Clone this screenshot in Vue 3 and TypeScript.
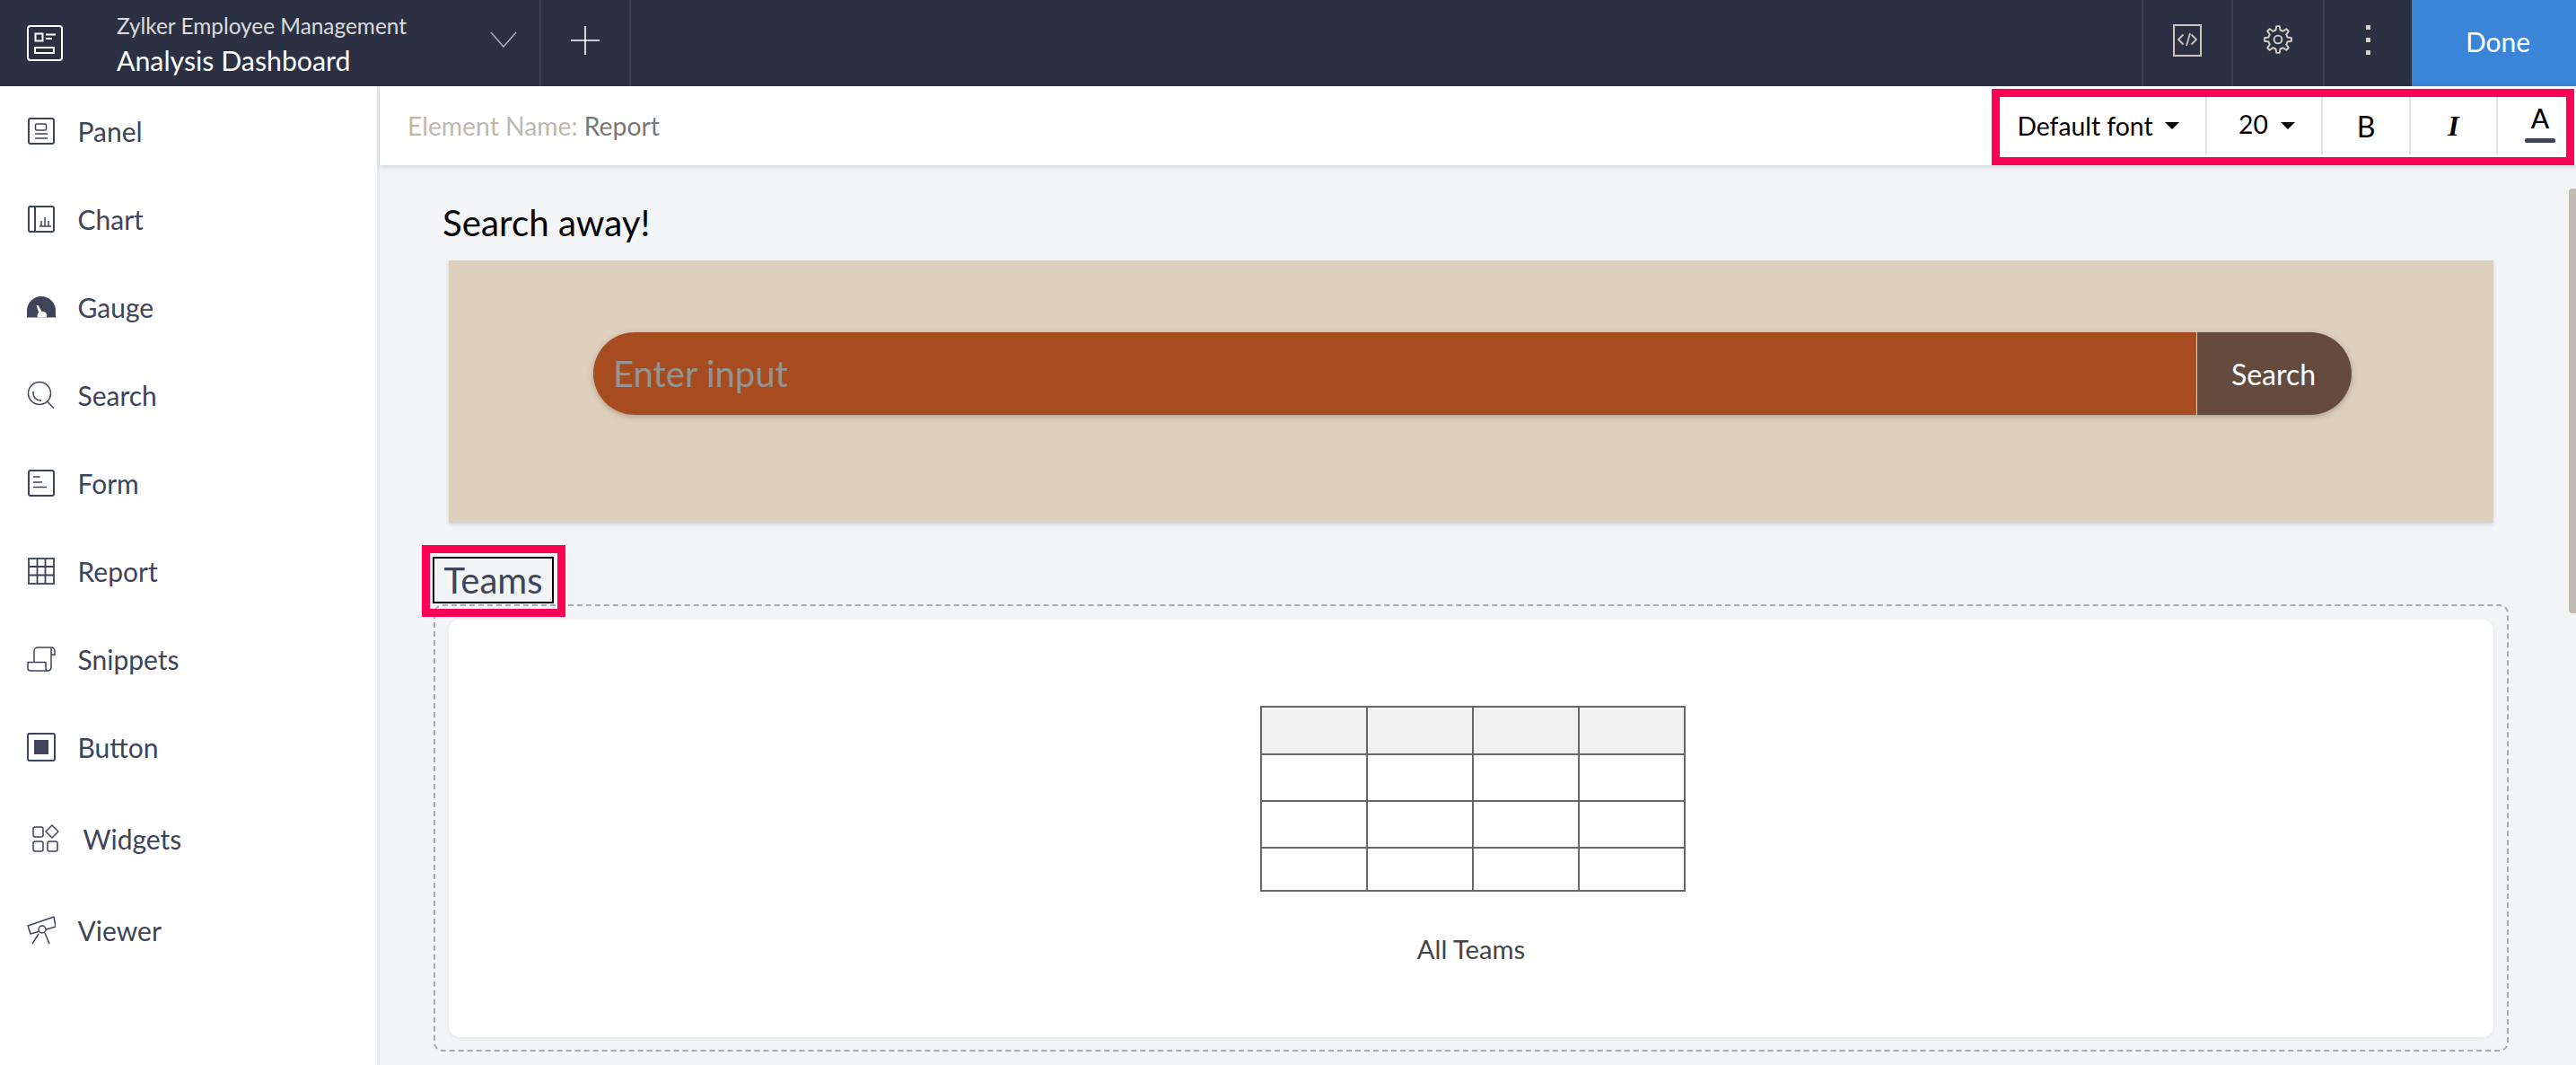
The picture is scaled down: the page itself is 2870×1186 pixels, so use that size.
<script setup lang="ts">
const gearPath = (() => {
  const pts: string[] = []
  const cx = 16, cy = 16
  const teeth = 8
  for (let i = 0; i < teeth; i++) {
    const a = (i * 2 * Math.PI) / teeth - Math.PI / 2
    const step = (2 * Math.PI) / teeth
    const list: [number, number][] = [
      [10.8, a - step * 0.3],
      [15, a - step * 0.15],
      [15, a + step * 0.15],
      [10.8, a + step * 0.3],
    ]
    for (const [r, t] of list) {
      pts.push(`${(cx + r * Math.cos(t)).toFixed(2)} ${(cy + r * Math.sin(t)).toFixed(2)}`)
    }
  }
  return 'M' + pts.join('L') + 'Z'
})()

const rows = [0, 1, 2, 3]
const cols = [0, 1, 2, 3]
</script>

<template>
  <div class="app">
    <header class="topbar">
      <div class="logo">
        <svg width="40" height="40" viewBox="0 0 40 40" fill="none" stroke="#fff" stroke-width="2">
          <rect x="1" y="1" width="38" height="38" rx="3" />
          <rect x="9.5" y="9.5" width="8" height="8" />
          <path d="M21 10.5H32M21 15H28" />
          <rect x="9" y="25" width="21" height="6" />
        </svg>
      </div>
      <div class="titles">
        <div class="app-name">Zylker Employee Management</div>
        <div class="page-name">Analysis Dashboard</div>
      </div>
      <div class="chev">
        <svg width="30" height="18" viewBox="0 0 30 18" fill="none" stroke="#a9abb2" stroke-width="1.6">
          <path d="M1 1L15 17L29 1" />
        </svg>
      </div>
      <div class="cell plus">
        <svg width="34" height="34" viewBox="0 0 34 34" fill="none" stroke="#fff" stroke-width="1.6">
          <path d="M17 1V33M1 17H33" />
        </svg>
      </div>
      <div class="spacer"></div>
      <div class="cell code">
        <svg width="32" height="36" viewBox="0 0 32 36" fill="none" stroke="#cbc6bc" stroke-width="2">
          <rect x="1" y="1" width="30" height="34" />
          <path d="M11.5 11.5L6 17L11.5 22.5M20.5 11.5L26 17L20.5 22.5M19 10L15 24" stroke-width="1.8" />
        </svg>
      </div>
      <div class="cell gear">
        <svg width="32" height="32" viewBox="0 0 32 32" fill="none" stroke="#d6d0c6" stroke-width="1.9" stroke-linejoin="round">
          <path :d="gearPath" />
          <circle cx="16" cy="16" r="4.4" />
        </svg>
      </div>
      <div class="cell dots"><i></i><i></i><i></i></div>
      <button class="done">Done</button>
    </header>

    <div class="body">
      <aside class="sidebar">
        <div class="nav-row">
          <span class="nav-icon">
            <svg width="32" height="32" viewBox="0 0 32 32" fill="none" stroke="#3e4459" stroke-width="2">
              <rect x="2" y="2" width="28" height="28" rx="2" />
              <rect x="9.5" y="8" width="12" height="7" rx="1.5" stroke-width="1.5" />
              <path d="M9 19H23M9 24H23" stroke-width="1.5" />
            </svg>
          </span>
          <span>Panel</span>
        </div>
        <div class="nav-row">
          <span class="nav-icon">
            <svg width="32" height="32" viewBox="0 0 32 32" fill="none" stroke="#3e4459" stroke-width="2">
              <rect x="2" y="2" width="28" height="28" rx="2" />
              <path d="M9 2V30" />
              <path d="M14 24H27M16 24V18M20 24V14M24 24V18" stroke-width="1.5" />
            </svg>
          </span>
          <span>Chart</span>
        </div>
        <div class="nav-row">
          <span class="nav-icon">
            <svg width="32" height="24" viewBox="0 0 32 24" fill="#3e4459">
              <path d="M0 23.5V16A16 16 0 0 1 32 16V23.5Z" />
              <path d="M10.5 10L12.8 10L16.5 17A4.5 4.5 0 0 1 21.7 23.5H12A5 5 0 0 1 13.2 18Z" fill="#fff" />
            </svg>
          </span>
          <span>Gauge</span>
        </div>
        <div class="nav-row">
          <span class="nav-icon">
            <svg width="32" height="32" viewBox="0 0 32 32" fill="none" stroke="#3e4459" stroke-width="1.5">
              <circle cx="14" cy="14" r="12.5" />
              <path d="M7 12C6.5 18 10 22 16 22" />
              <path d="M22.5 23L30 30.5" />
            </svg>
          </span>
          <span>Search</span>
        </div>
        <div class="nav-row">
          <span class="nav-icon">
            <svg width="32" height="32" viewBox="0 0 32 32" fill="none" stroke="#3e4459" stroke-width="2">
              <rect x="2" y="2" width="28" height="28" rx="2" />
              <path d="M7 9H14.5M7 15H17M7 20.5H22" stroke-width="1.5" />
            </svg>
          </span>
          <span>Form</span>
        </div>
        <div class="nav-row">
          <span class="nav-icon">
            <svg width="32" height="32" viewBox="0 0 32 32" fill="none" stroke="#3e4459" stroke-width="1.8">
              <rect x="2" y="2" width="28" height="28" />
              <path d="M11.5 2V30M20.5 2V30M2 11H30M2 20.5H30" />
            </svg>
          </span>
          <span>Report</span>
        </div>
        <div class="nav-row">
          <span class="nav-icon">
            <svg width="32" height="30" viewBox="0 0 32 30" fill="none" stroke="#3e4459" stroke-width="1.5">
              <path d="M1 18.5H21V25A3 3 0 0 0 24 28H4A3 3 0 0 1 1 25Z" />
              <path d="M8 18V6A4 4 0 0 1 12 2H27A4 4 0 0 1 31 6V10H27" />
              <path d="M27 3V24A4 4 0 0 1 24 28" />
            </svg>
          </span>
          <span>Snippets</span>
        </div>
        <div class="nav-row">
          <span class="nav-icon">
            <svg width="32" height="32" viewBox="0 0 32 32" fill="none" stroke="#3e4459" stroke-width="2">
              <rect x="1" y="1" width="30" height="30" rx="2" />
              <rect x="8" y="8" width="16" height="16" fill="#3e4459" stroke="none" />
            </svg>
          </span>
          <span>Button</span>
        </div>
        <div class="nav-row shifted">
          <span class="nav-icon">
            <svg width="32" height="32" viewBox="0 0 32 32" fill="none" stroke="#3e4459" stroke-width="1.5">
              <rect x="1" y="3" width="11" height="11" rx="2" />
              <rect x="1" y="19" width="11" height="11" rx="2" />
              <rect x="17" y="19" width="11" height="11" rx="2" />
              <path d="M22 1L29 8L22 15L15 8Z" stroke-linejoin="round" />
            </svg>
          </span>
          <span>Widgets</span>
        </div>
        <div class="nav-row viewer">
          <span class="nav-icon">
            <svg width="32" height="32" viewBox="0 0 32 32" fill="none" stroke="#3e4459" stroke-width="1.5">
              <path d="M1 11L30 1L32 12L4 20Z" stroke-linejoin="round" />
              <circle cx="17" cy="15" r="4" fill="#fff" />
              <path d="M13 20L6 31M20 19L25 31" />
            </svg>
          </span>
          <span>Viewer</span>
        </div>
      </aside>

      <main class="main">
        <div class="toolbar">
          <div class="element-name"><span class="label">Element Name:</span> Report</div>
          <div class="format">
            <div class="fmt font">Default font <b class="caret"></b></div>
            <div class="fmt size"><span class="size-val">20</span> <b class="caret"></b></div>
            <div class="fmt bold">B</div>
            <div class="fmt italic">I</div>
            <div class="fmt color"><span>A</span><i></i></div>
          </div>
          <div class="mark mark-tools"></div>
        </div>

        <div class="content">
          <h2 class="section-title">Search away!</h2>
          <section class="search-panel">
            <div class="search-bar">
              <div class="search-input">Enter input</div>
              <button class="search-btn">Search</button>
            </div>
          </section>

          <div class="teams-heading">
            <span class="teams-box">Teams</span>
            <div class="mark mark-teams"></div>
          </div>
          <div class="drop-zone">
            <div class="report-card">
              <table class="thumb">
                <tr v-for="r in rows" :key="r" :class="{ head: r === 0, last: r === 3 }">
                  <td v-for="c in cols" :key="c"></td>
                </tr>
              </table>
              <div class="report-name">All Teams</div>
            </div>
          </div>
        </div>
        <div class="scroll-thumb"></div>
      </main>
    </div>
  </div>
</template>

<style>
html, body { margin: 0; padding: 0; background: #fff; overflow: hidden; }
</style>

<style scoped>
.app {
  width: 2870px;
  height: 1186px;
  display: flex;
  flex-direction: column;
  overflow: hidden;
  font-family: Lato, "Open Sans", sans-serif;
  color: #3e4459;
}
.topbar {
  height: 96px;
  flex: none;
  background: #2b3142;
  display: flex;
  align-items: stretch;
  color: #fff;
}
.logo { width: 130px; display: flex; align-items: center; padding-left: 30px; box-sizing: border-box; }
.titles { width: 400px; display: flex; flex-direction: column; justify-content: center; padding-top: 8px; box-sizing: border-box; }
.app-name { font-size: 24.4px; line-height: 32px; color: #dcdcdc; margin-top: -4px; }
.page-name { font-size: 30.3px; line-height: 40px; color: #fff; margin-top: 2px; }
.chev { width: 71px; display: flex; align-items: center; padding: 0 0 9px 16px; box-sizing: border-box; }
.cell {
  display: flex;
  align-items: center;
  justify-content: center;
  border-left: 2px solid #3c4254;
  box-sizing: border-box;
  padding-bottom: 7px;
}
.plus { width: 102px; border-right: 2px solid #3c4254; }
.spacer { flex: 1; }
.code { width: 100px; padding-bottom: 6px; }
.gear { width: 102px; padding-bottom: 8px; }
.dots { width: 99px; flex-direction: column; gap: 9px; padding-bottom: 8px; }
.dots i { width: 5px; height: 5px; background: #d6d0c6; display: block; }
.done {
  width: 183px;
  border: 0;
  background: #3a85d8;
  color: #fff;
  font: 30px Lato, sans-serif;
  padding: 0 0 4px 9px;
}
.body { flex: 1; display: flex; min-height: 0; }
.sidebar {
  width: 423px;
  flex: none;
  box-sizing: border-box;
  background: #fff;
  border-right: 3px solid #eaebed;
  padding-top: 1px;
  font-size: 30px;
}
.nav-row {
  height: 98px;
  display: flex;
  align-items: center;
  padding-left: 30px;
}
.nav-icon { width: 56.5px; display: flex; align-items: center; flex: none; }
.shifted { margin-top: 4px; padding-left: 36px; }
.viewer { margin-top: 4px; }
.main { flex: 1; position: relative; background: #f2f4f6; display: flex; flex-direction: column; min-width: 0; }
.toolbar {
  position: relative;
  height: 88px;
  flex: none;
  background: #fff;
  box-shadow: 0 2px 6px rgba(60, 70, 90, 0.18);
  display: flex;
  align-items: center;
  justify-content: space-between;
  padding-left: 31px;
  font-size: 28.3px;
  color: #787878;
  z-index: 1;
}
.label { color: #bcb8ae; }
.format {
  width: 631px;
  height: 64px;
  margin-right: 11px;
  display: flex;
  color: #000;
  font-size: 28.3px;
}
.fmt {
  display: flex;
  align-items: center;
  justify-content: center;
  border-right: 2px solid #e2e2e2;
  box-sizing: border-box;
}
.font { width: 231px; gap: 13px; padding-right: 10px; }
.size { width: 129px; gap: 14px; padding-left: 6px; }
.size-val { margin-top: -5px; }
.bold { width: 98px; font-size: 32px; }
.italic { width: 97px; font: italic 700 32px "Liberation Serif", serif; }
.color {
  flex: 1;
  border-right: 0;
  flex-direction: column;
  font-size: 30px;
  font-weight: 500;
  line-height: 30px;
  padding: 0 0 6px 18px;
}
.color i { width: 34px; height: 5px; border-radius: 2px; background: #3e4459; display: block; margin-top: 8px; }
.caret {
  width: 0;
  height: 0;
  border-left: 8px solid transparent;
  border-right: 8px solid transparent;
  border-top: 8px solid #000;
  display: block;
}
.mark { position: absolute; border: 9px solid #ff0055; box-sizing: border-box; pointer-events: none; }
.mark-tools { right: 2px; top: 3px; width: 649px; height: 85px; }
.content { flex: 1; min-height: 0; padding: 41px 92px 0 77px; }
.section-title {
  margin: 0 0 19px -7px;
  font-size: 40.3px;
  font-weight: 400;
  line-height: 46px;
  color: #000;
}
.search-panel {
  height: 292px;
  background: #ddd0bc;
  box-shadow: 0 2px 4px rgba(90, 100, 120, 0.22);
  display: flex;
  align-items: flex-start;
  justify-content: flex-start;
  padding: 80px 0 0 161px;
  box-sizing: border-box;
}
.search-bar {
  width: 1959px;
  height: 92px;
  display: flex;
  border-radius: 46px;
  overflow: hidden;
  box-shadow: 0 2px 6px rgba(60, 50, 40, 0.3);
}
.search-input {
  flex: 1;
  background: #a74c20;
  color: #949494;
  font-size: 40px;
  line-height: 92px;
  padding-left: 22px;
  border-right: 1px solid #e8d8c4;
}
.search-btn {
  width: 172px;
  border: 0;
  background: #644b3e;
  color: #fff;
  font: 32px Lato, sans-serif;
  padding: 0 2px 0 0;
}
.teams-heading { position: relative; margin: 38px 0 1px -18px; height: 52px; }
.teams-box {
  display: inline-block;
  box-sizing: border-box;
  height: 52px;
  width: 135px;
  border: 2px solid #000;
  font-size: 40px;
  line-height: 48px;
  text-align: center;
  color: #3e4459;
}
.mark-teams { left: -12px; top: -13px; width: 160px; height: 80px; }
.drop-zone {
  margin: 0 -17px;
  height: 498px;
  box-sizing: border-box;
  border: 2px dashed #aaa;
  border-radius: 10px;
  padding: 15px;
}
.report-card {
  height: 465px;
  background: #fff;
  border-radius: 12px;
  box-shadow: 0 1px 4px rgba(60, 70, 90, 0.1);
  display: flex;
  flex-direction: column;
  align-items: center;
  padding-top: 96px;
  box-sizing: border-box;
}
.thumb {
  width: 474px;
  margin-left: 3px;
  border-collapse: collapse;
  table-layout: fixed;
}
.thumb td { border: 2px solid #666669; height: 50px; padding: 0; }
.thumb .head td { background: #f0f1f0; height: 51px; }
.thumb .last td { height: 46px; }
.report-name { margin-top: 47px; font-size: 29.2px; line-height: 34px; color: #444; }
.scroll-thumb {
  position: absolute;
  top: 114px;
  right: 0;
  width: 8px;
  height: 473px;
  border-radius: 4px 0 0 4px;
  background: #c0bbb3;
}
</style>
